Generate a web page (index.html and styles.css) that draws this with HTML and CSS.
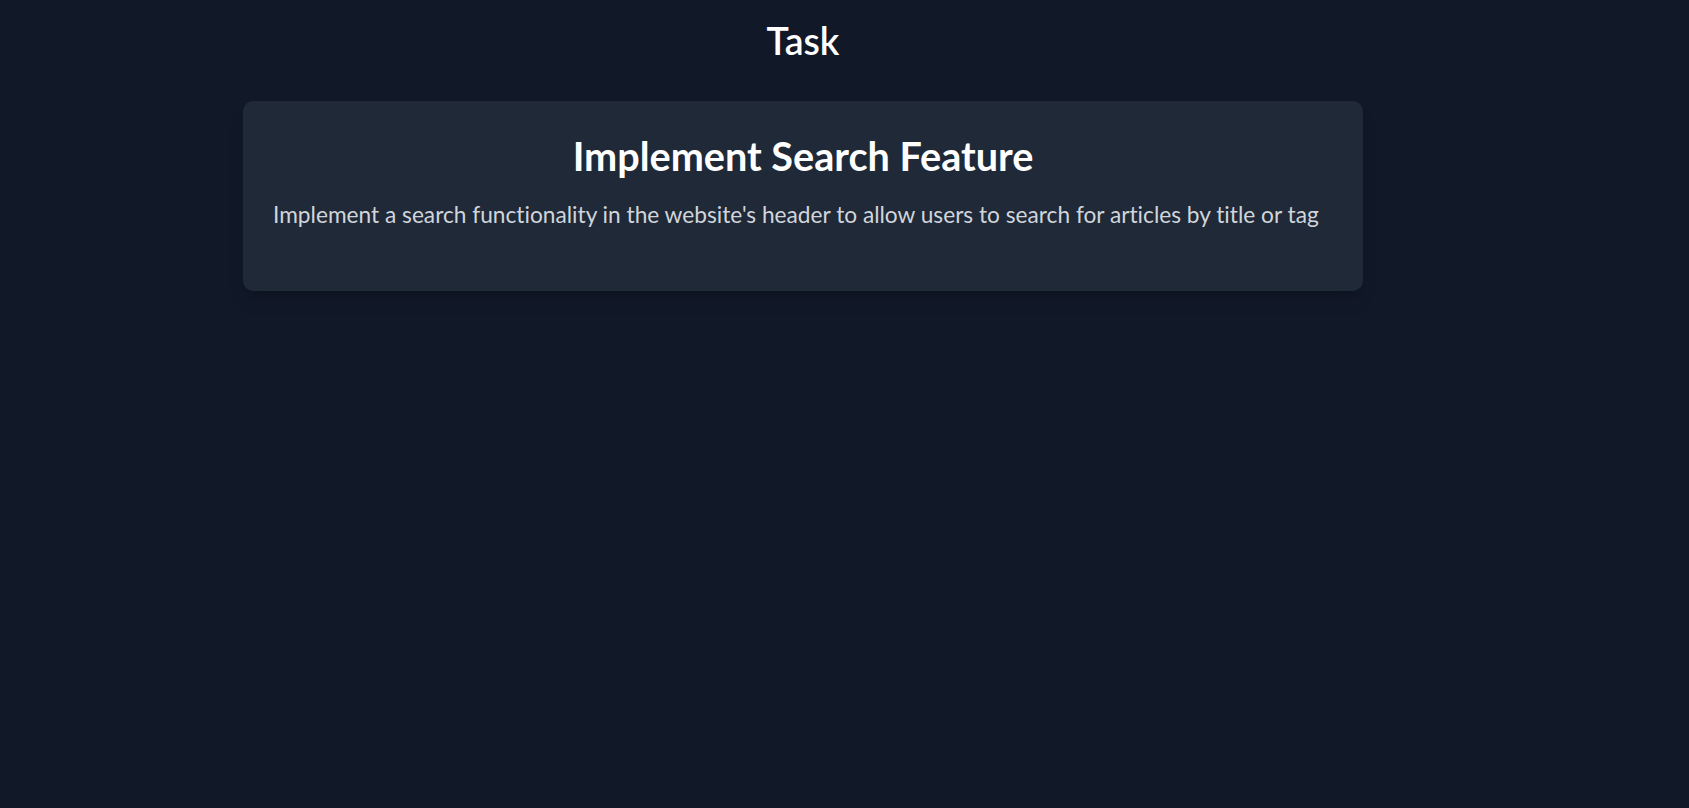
FILE: index.html
```html
<!DOCTYPE html>
<html lang="en">
<head>
<meta charset="utf-8">
<title>Task</title>
<link rel="stylesheet" href="styles.css">
</head>
<body>
<div class="page">
  <h1 class="page-title">Task</h1>
  <div class="card">
    <h2 class="card-title">Implement Search Feature</h2>
    <p class="card-desc">Implement a search functionality in the website's header to allow users to search for articles by title or tag</p>
  </div>
</div>
</body>
</html>
```
FILE: styles.css
```css
html, body {
  margin: 0;
  padding: 0;
  background: #111827;
  min-height: 100%;
}
body {
  font-family: Lato, "Open Sans", sans-serif;
  font-variant-ligatures: none;
  color: #ffffff;
}
.page {
  display: flex;
  flex-direction: column;
  align-items: center;
  padding: 18px 83px 0 0;
  min-height: 790px;
}
.page-title {
  margin: 0 0 38px;
  font-size: 37.5px;
  line-height: 45px;
  font-weight: 600;
  color: #ffffff;
}
.card {
  box-sizing: border-box;
  width: 1120px;
  padding: 32px 30px 30px;
  background: #1f2937;
  border-radius: 10px;
  box-shadow: 0 12px 19px -4px rgba(0, 0, 0, 0.12), 0 5px 8px -5px rgba(0, 0, 0, 0.12);
}
.card-title {
  margin: 0 0 19px;
  text-align: center;
  font-size: 39.6px;
  line-height: 45px;
  font-weight: 700;
  color: #ffffff;
}
.card-desc {
  margin: 0 0 29px;
  font-size: 22.7px;
  line-height: 35px;
  color: #d1d5db;
}
```
